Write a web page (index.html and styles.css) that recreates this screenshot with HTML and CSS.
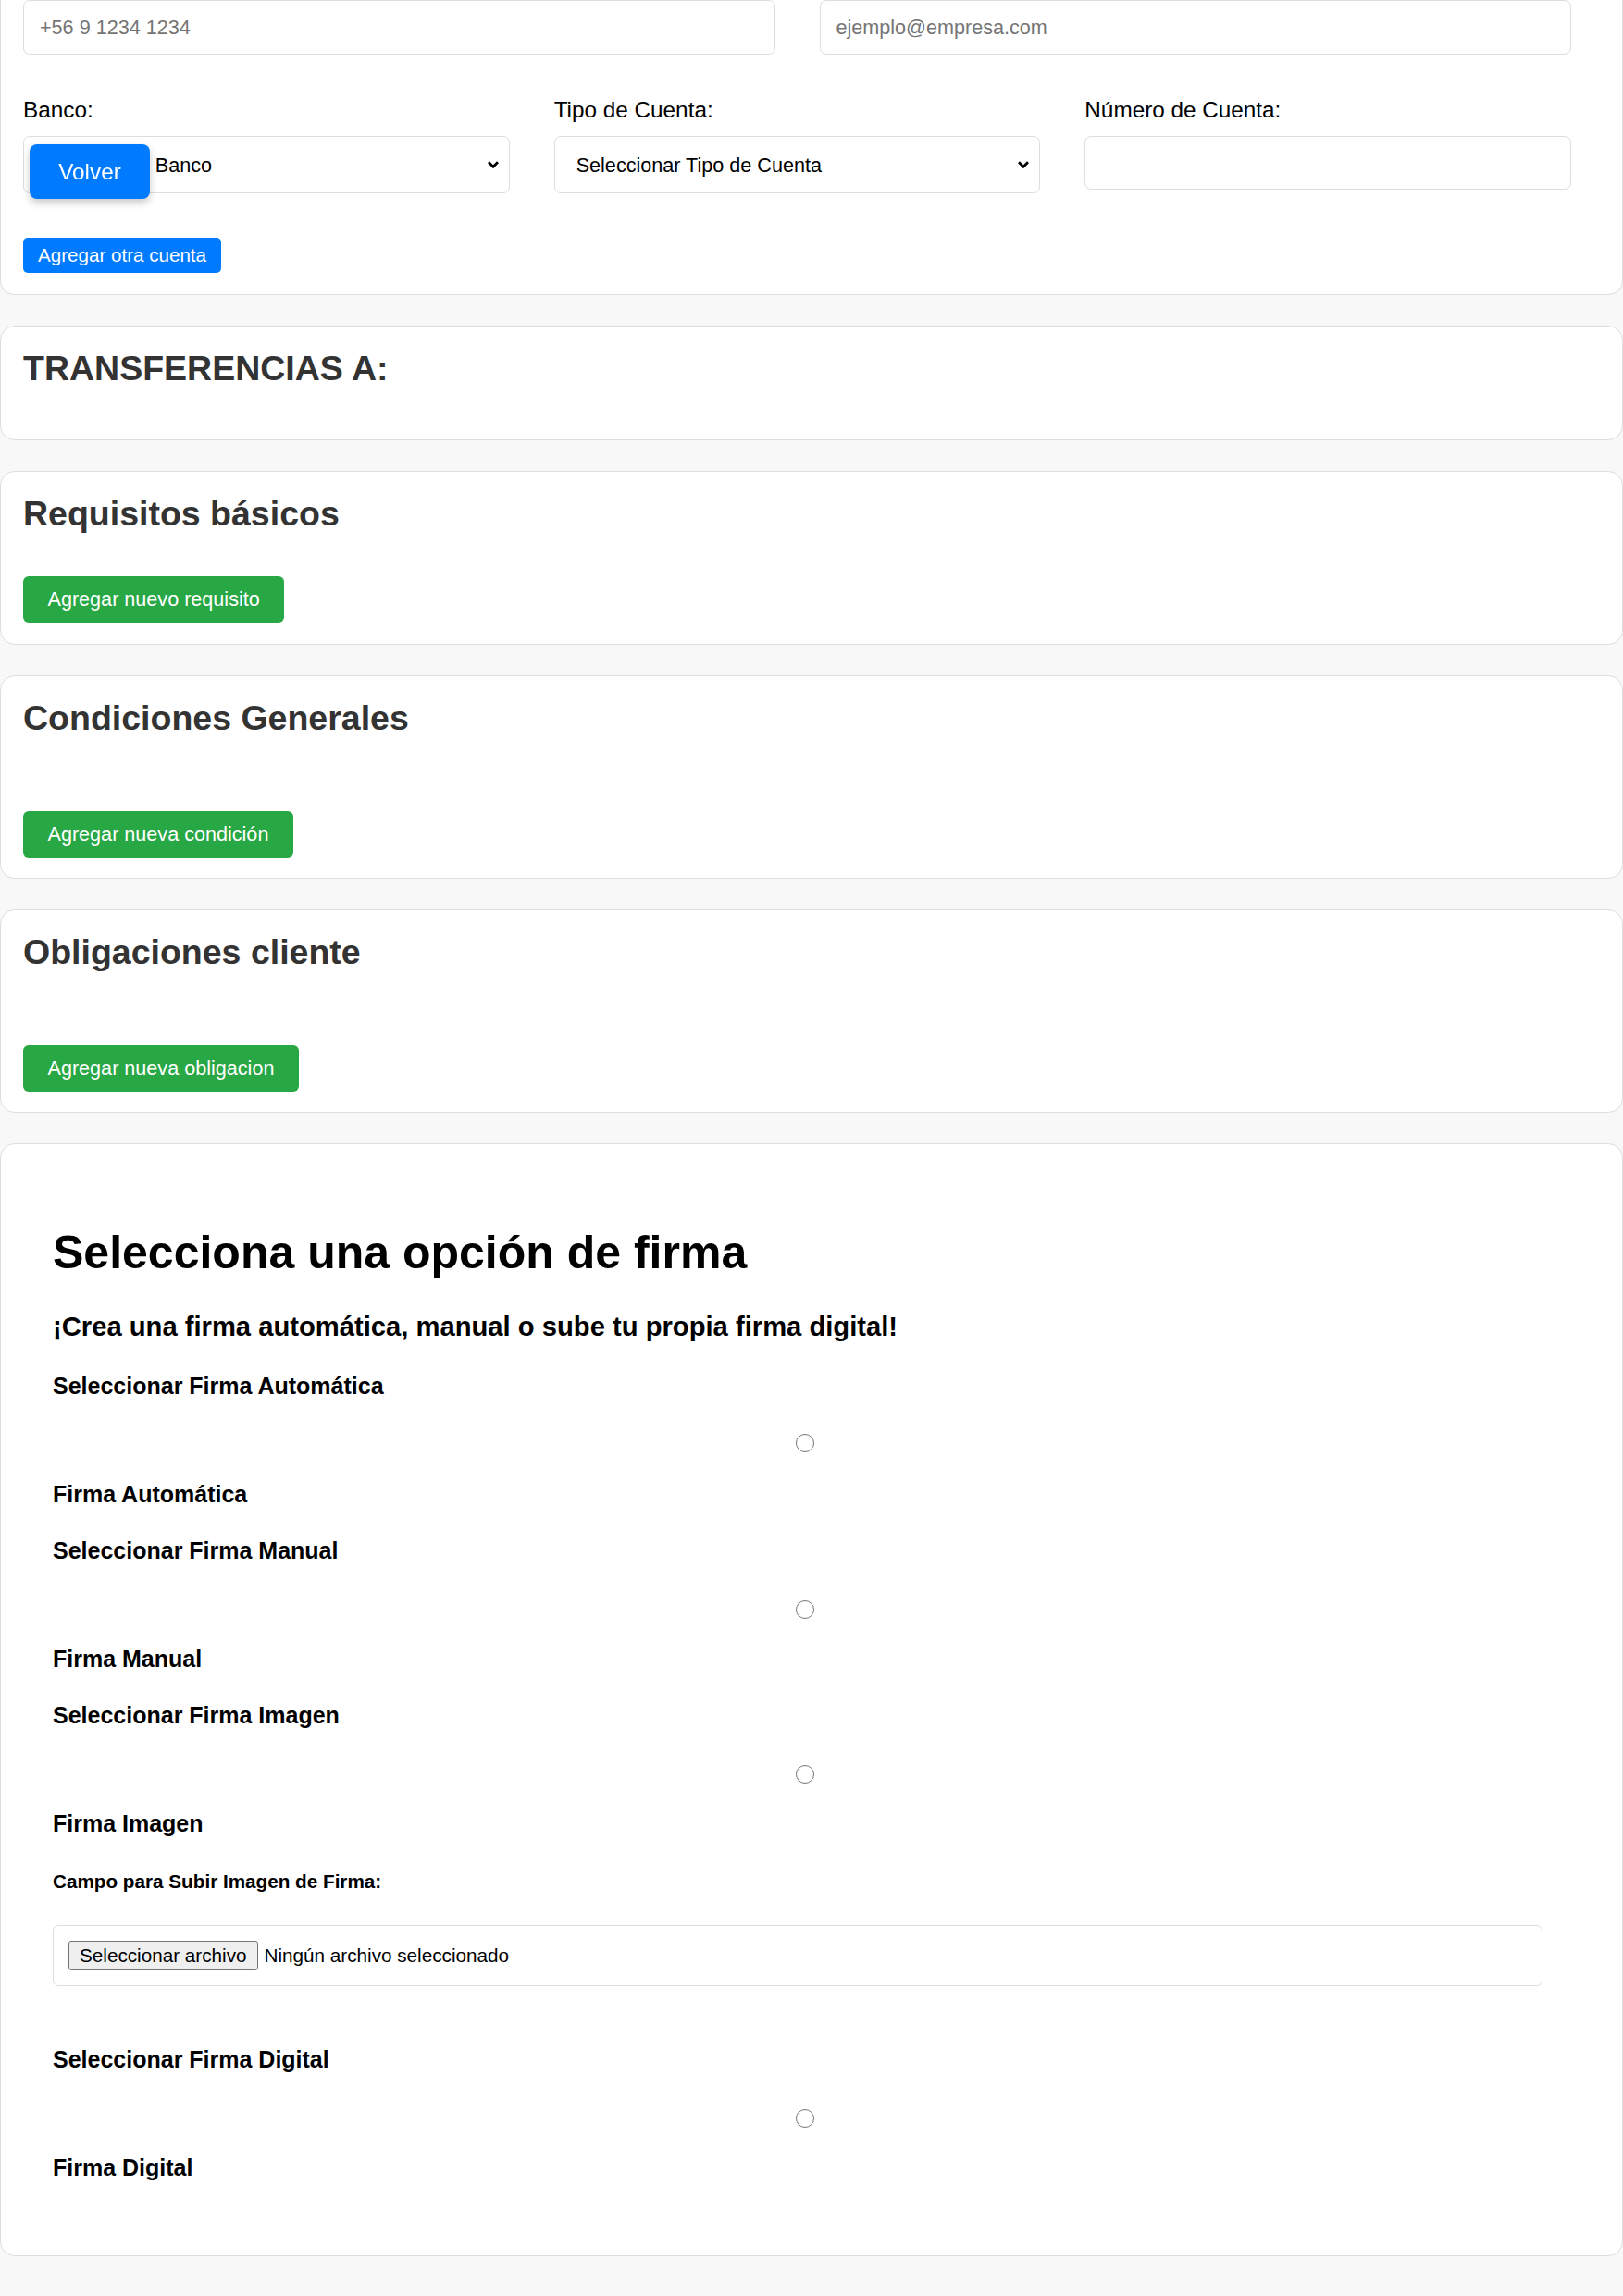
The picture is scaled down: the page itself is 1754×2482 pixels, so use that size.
FILE: index.html
```html
<!DOCTYPE html>
<html lang="es">
<head>
<meta charset="utf-8">
<title>Contrato</title>
<link rel="stylesheet" href="styles.css">
</head>
<body>
<a class="volver" href="#">Volver</a>
<main class="page">
  <section class="card card-cut">
    <div class="grid-2">
      <input class="field field-top" type="tel" placeholder="+56 9 1234 1234">
      <input class="field field-top" type="email" placeholder="ejemplo@empresa.com">
    </div>
    <div class="grid-3">
      <div class="group">
        <label class="lbl">Banco:</label>
        <select class="sel"><option>Seleccionar Banco</option></select>
      </div>
      <div class="group">
        <label class="lbl">Tipo de Cuenta:</label>
        <select class="sel"><option>Seleccionar Tipo de Cuenta</option></select>
      </div>
      <div class="group">
        <label class="lbl">Número de Cuenta:</label>
        <input class="field field-num" type="text">
      </div>
    </div>
    <button class="btn btn-blue" type="button">Agregar otra cuenta</button>
  </section>

  <section class="card card-transfer">
    <h2 class="card-title">TRANSFERENCIAS A:</h2>
  </section>

  <section class="card card-req">
    <h2 class="card-title">Requisitos básicos</h2>
    <button class="btn btn-green" type="button">Agregar nuevo requisito</button>
  </section>

  <section class="card card-list">
    <h2 class="card-title">Condiciones Generales</h2>
    <button class="btn btn-green" type="button">Agregar nueva condición</button>
  </section>

  <section class="card card-list">
    <h2 class="card-title">Obligaciones cliente</h2>
    <button class="btn btn-green" type="button">Agregar nueva obligacion</button>
  </section>

  <section class="card card-firma">
    <h1 class="firma-title">Selecciona una opción de firma</h1>
    <h3 class="firma-sub">¡Crea una firma automática, manual o sube tu propia firma digital!</h3>

    <div class="opt opt-first">
      <label class="opt-title">Seleccionar Firma Automática</label>
      <input class="radio" type="radio" name="firma">
      <p class="opt-name">Firma Automática</p>
    </div>

    <div class="opt">
      <label class="opt-title">Seleccionar Firma Manual</label>
      <input class="radio" type="radio" name="firma">
      <p class="opt-name">Firma Manual</p>
    </div>

    <div class="opt">
      <label class="opt-title">Seleccionar Firma Imagen</label>
      <input class="radio" type="radio" name="firma">
      <p class="opt-name">Firma Imagen</p>
      <p class="campo">Campo para Subir Imagen de Firma:</p>
      <div class="file-box">
        <span class="file-btn">Seleccionar archivo</span>
        <span class="file-text">Ningún archivo seleccionado</span>
      </div>
    </div>

    <div class="opt opt-digital">
      <label class="opt-title">Seleccionar Firma Digital</label>
      <input class="radio" type="radio" name="firma">
      <p class="opt-name">Firma Digital</p>
    </div>
  </section>
</main>
</body>
</html>
```

FILE: styles.css
```css
* {
  box-sizing: border-box;
}

html,
body {
  margin: 0;
  padding: 0;
}

body {
  width: 1754px;
  min-height: 2482px;
  background: #f8f8f8;
  font-family: "Liberation Sans", Arial, Helvetica, sans-serif;
  color: #000;
}

.page {
  display: flex;
  flex-direction: column;
  gap: 33px;
}

.volver {
  position: fixed;
  left: 32px;
  top: 156px;
  width: 130px;
  height: 59px;
  display: flex;
  align-items: center;
  justify-content: center;
  background: #007bff;
  color: #fff;
  font-size: 24.3px;
  text-decoration: none;
  border-radius: 8px;
  box-shadow: 0 4px 8px rgba(0, 0, 0, 0.22);
  z-index: 10;
}

.card {
  background: #fff;
  border: 1px solid #dedede;
  border-radius: 16px;
  padding: 24px 55px 23px 24px;
}

.card-cut {
  border-top: none;
  border-radius: 0 0 16px 16px;
  padding-top: 0;
}

.grid-2 {
  display: grid;
  grid-template-columns: 1fr 1fr;
  column-gap: 48px;
}

.grid-3 {
  display: grid;
  grid-template-columns: repeat(3, 1fr);
  column-gap: 48px;
  align-items: start;
  margin-top: 46px;
}

.group {
  display: flex;
  flex-direction: column;
}

.lbl {
  display: block;
  font-size: 24.3px;
  line-height: 28px;
  margin-bottom: 14px;
}

.field {
  width: 100%;
  height: 59px;
  border: 1px solid #dedede;
  border-radius: 7px;
  padding: 0 17px;
  background: #fff;
  font-family: "Liberation Sans", Arial, Helvetica, sans-serif;
  font-size: 21.6px;
  color: #000;
}

.field::placeholder {
  color: #757575;
}

.field-num {
  height: 58px;
}

.sel {
  appearance: none;
  -webkit-appearance: none;
  width: 100%;
  height: 62px;
  border: 1px solid #dedede;
  border-radius: 7px;
  padding: 0 40px 0 23px;
  background-color: #fff;
  background-image: url("data:image/svg+xml,%3Csvg xmlns='http://www.w3.org/2000/svg' width='14' height='10' viewBox='0 0 14 10'%3E%3Cpath d='M2 2.2 L7 7.2 L12 2.2' fill='none' stroke='%23000' stroke-width='2.8'/%3E%3C/svg%3E");
  background-repeat: no-repeat;
  background-position: right 10px center;
  background-size: 14px 10px;
  font-family: "Liberation Sans", Arial, Helvetica, sans-serif;
  font-size: 21.6px;
  color: #000;
}

.btn {
  display: inline-flex;
  align-items: center;
  align-self: flex-start;
  border: none;
  color: #fff;
  font-family: "Liberation Sans", Arial, Helvetica, sans-serif;
  cursor: pointer;
}

.btn-blue {
  margin-top: 48px;
  height: 38px;
  padding: 0 16px;
  background: #007bff;
  border-radius: 5px;
  font-size: 20.6px;
}

.btn-green {
  height: 50px;
  padding: 0 26.5px;
  background: #28a745;
  border-radius: 6px;
  font-size: 21.6px;
}

.card-title {
  margin: 0;
  font-size: 37.5px;
  line-height: 43px;
  font-weight: bold;
  color: #333;
}

.card-transfer .card-title {
  margin-bottom: 32px;
}

.card-req .btn-green {
  margin-top: 46px;
}

.card-list {
  padding-bottom: 22px;
}

.card-list .btn-green {
  margin-top: 79px;
}

/* Firma */
.card-firma {
  padding: 88px 71px 80px 56px;
}

.firma-title {
  margin: 0;
  font-size: 50px;
  line-height: 58px;
  font-weight: bold;
}

.firma-sub {
  margin: 34px 0 0;
  font-size: 29.2px;
  line-height: 34px;
  font-weight: bold;
}

.opt {
  display: flex;
  flex-direction: column;
  margin-top: 32px;
}

.opt-first {
  margin-top: 33px;
}

.opt-digital {
  margin-top: 65px;
}

.opt-title {
  display: block;
  font-size: 25px;
  line-height: 29px;
  font-weight: bold;
}

.radio {
  display: block;
  width: 20px;
  height: 20px;
  margin: 39px auto 0;
}

.opt-first .radio {
  margin-top: 37px;
}

.opt-first .opt-name {
  margin-top: 31px;
}

.opt-name {
  margin: 29px 0 0;
  font-size: 25px;
  line-height: 29px;
  font-weight: bold;
}

.campo {
  margin: 36px 0 0;
  font-size: 20.7px;
  line-height: 24px;
  font-weight: bold;
}

.file-box {
  display: flex;
  align-items: center;
  height: 66px;
  margin: 35px 15px 0 0;
  padding: 0 16px;
  border: 1px solid #dedede;
  border-radius: 6px;
  font-size: 20.7px;
}

.file-btn {
  display: inline-flex;
  align-items: center;
  height: 32px;
  padding: 0 11px;
  background: #efefef;
  border: 1px solid #767676;
  border-radius: 3px;
  color: #000;
}

.file-text {
  margin-left: 7px;
  color: #000;
}
```
